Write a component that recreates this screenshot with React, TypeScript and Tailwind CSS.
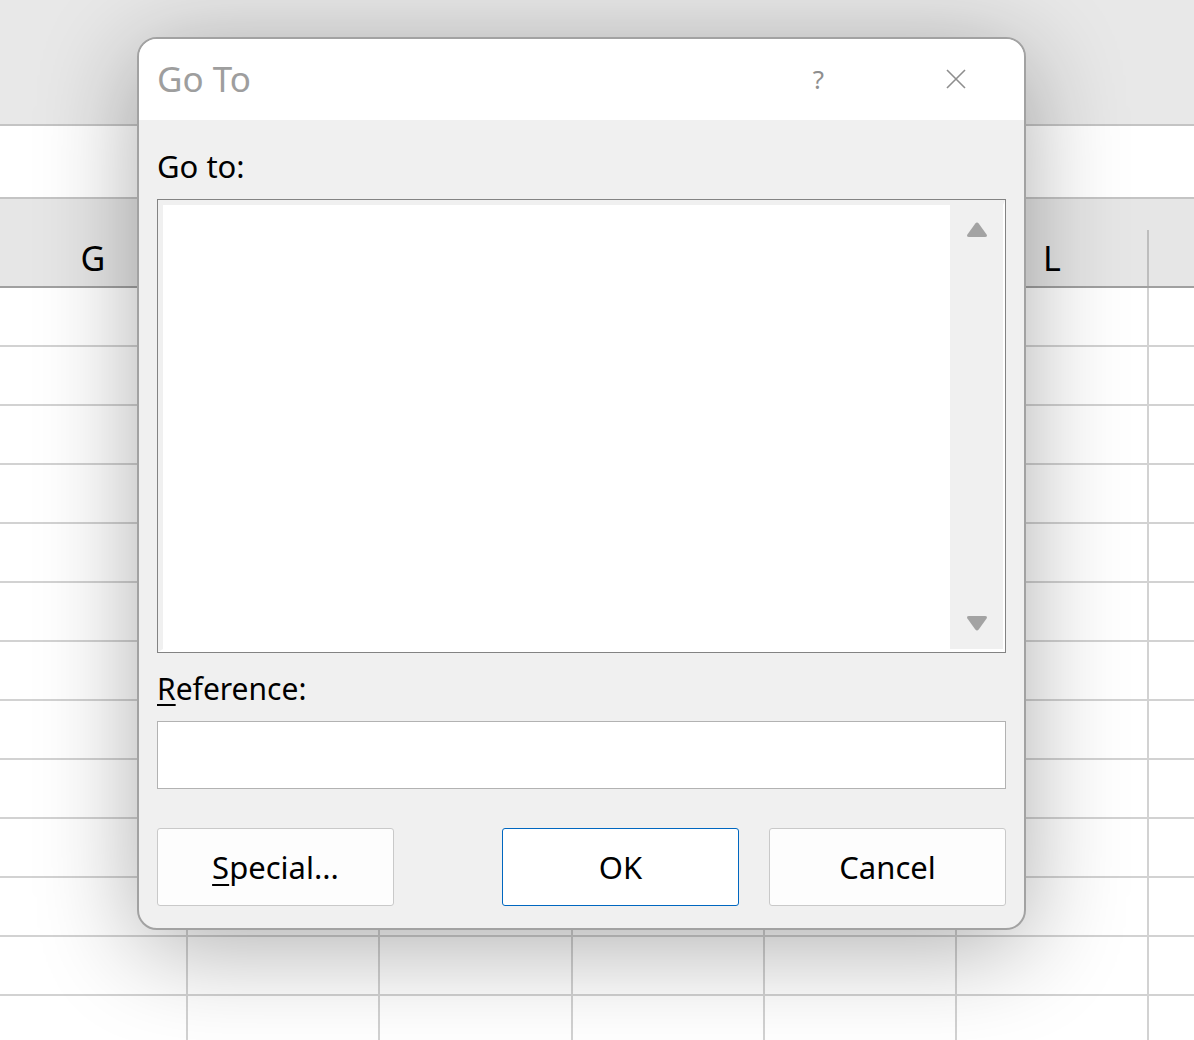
import React from "react";

const colWidths = ["w-[188px]", "w-[192px]", "w-[193px]", "w-[192px]", "w-[192px]", "w-[192px]"];

function GridRow() {
  return (
    <div className="flex h-[59px] border-b-2 border-[#d2d2d2]">
      {colWidths.map((w, i) => (
        <div key={i} className={`${w} shrink-0 border-r-2 border-[#d2d2d2]`} />
      ))}
      <div className="flex-1" />
    </div>
  );
}

function HeaderCell({ w, label }: { w: string; label?: string }) {
  return (
    <div className={`${w} shrink-0 flex`}>
      <div className="flex-1 flex items-end justify-center pb-[6px] text-[34px] leading-[44px] text-black">
        {label}
      </div>
      <div className="w-[2px] h-[56px] self-end bg-[#bdbdbd]" />
    </div>
  );
}

function Triangle({ down }: { down?: boolean }) {
  return (
    <svg width="22" height="16" viewBox="0 0 22 16" className={down ? "rotate-180" : ""}>
      <path
        d="M9.3 1.6 Q11 -0.4 12.7 1.6 L20.6 12.4 Q21.8 15 19 15 L3 15 Q0.2 15 1.4 12.4 Z"
        fill="#a3a3a3"
      />
    </svg>
  );
}

function Button({ children, primary }: { children: React.ReactNode; primary?: boolean }) {
  return (
    <button
      className={`w-[237px] h-[78px] rounded-[3px] border text-[31px] text-black flex items-center justify-center ${
        primary ? "bg-white border-[#0067c0]" : "bg-[#fdfdfd] border-[#c9c9c9]"
      }`}
    >
      {children}
    </button>
  );
}

export default function App() {
  return (
    <div
      className="relative w-[1194px] h-[1040px] overflow-hidden bg-white"
      style={{ fontFamily: '"Noto Sans", "Open Sans", sans-serif' }}
    >
      {/* excel sheet behind */}
      <div className="h-[124px] bg-[#e8e8e8]" />
      <div className="h-[2px] bg-[#c4c4c4]" />
      <div className="h-[71px] bg-white" />
      <div className="h-[2px] bg-[#c4c4c4]" />
      <div className="flex h-[87px] bg-[#e6e6e6]">
        <HeaderCell w="w-[188px]" label="G" />
        <HeaderCell w="w-[192px]" label="H" />
        <HeaderCell w="w-[193px]" label="I" />
        <HeaderCell w="w-[192px]" label="J" />
        <HeaderCell w="w-[192px]" label="K" />
        <HeaderCell w="w-[192px]" label="L" />
        <div className="flex-1" />
      </div>
      <div className="h-[2px] bg-[#a0a0a0]" />
      {Array.from({ length: 13 }).map((_, i) => (
        <GridRow key={i} />
      ))}

      {/* Go To dialog */}
      <div className="absolute left-[137px] top-[37px] w-[889px] h-[893px] rounded-[20px] border-2 border-[#a2a2a2] bg-[#f0f0f0] overflow-hidden shadow-[0_18px_100px_rgba(0,0,0,0.32)] flex flex-col">
        <div className="h-[81px] bg-white flex items-center pl-[18px] pr-[58px] pb-[2px]">
          <span className="text-[35px] leading-none text-[#9e9e9e]">Go To</span>
          <span className="ml-auto text-[26px] leading-none text-[#8e8e8e]">?</span>
          <svg width="20" height="20" viewBox="0 0 20 20" className="ml-[122px]">
            <path d="M1 1 L19 19 M19 1 L1 19" stroke="#8e8e8e" strokeWidth="1.6" />
          </svg>
        </div>

        <div className="flex-1 px-[18px] pt-[24px] flex flex-col">
          <div className="h-[44px] text-[31px] leading-[44px] text-black">Go to:</div>
          <div className="mt-[11px] h-[454px] border border-[#838383]">
            <div className="h-full flex border-t-[5px] border-l-[5px] border-t-[#f0f0f0] border-l-[#f0f0f0] border-r-[2px] border-b-[3px] border-r-white border-b-white">
              <div className="flex-1 bg-white" />
              <div className="w-[53px] bg-[#f0f0f0] flex flex-col items-center justify-between pt-[17px] pb-[18px]">
                <Triangle />
                <Triangle down />
              </div>
            </div>
          </div>

          <div className="mt-[14px] h-[44px] text-[30px] leading-[44px] text-black">
            <span className="underline underline-offset-[4px] decoration-[2px]">R</span>eference:
          </div>
          <div className="mt-[10px] h-[68px] bg-white border border-[#b2b2b2]" />

          <div className="mt-[39px] flex">
            <Button>
              <span>
                <span className="underline underline-offset-[5px] decoration-[2px]">S</span>pecial...
              </span>
            </Button>
            <div className="ml-auto flex gap-[30px]">
              <Button primary>OK</Button>
              <Button>Cancel</Button>
            </div>
          </div>
        </div>
      </div>
    </div>
  );
}
